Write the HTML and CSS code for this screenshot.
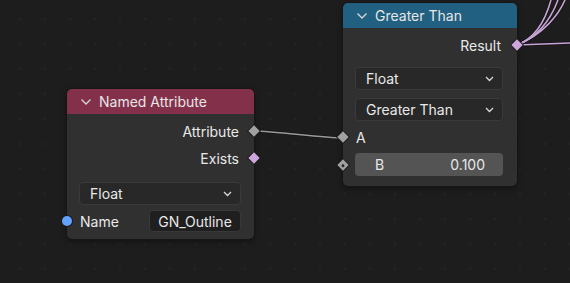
FILE: index.html
```html
<!DOCTYPE html>
<html lang="en">
<head>
  <meta charset="UTF-8">
  <meta name="viewport" content="width=device-width, initial-scale=1.0">
  <title>Node Editor</title>
  <link rel="stylesheet" href="styles.css">
</head>
<body>
  <div class="node-editor">
    <!-- Links between sockets -->
    <svg class="links" width="570" height="283" viewBox="0 0 570 283">
      <g class="link-shadow">
        <path d="M254 131 C 276 131.5, 321 137.5, 343 138" />
        <path d="M517 45 L 570 43" />
        <path d="M517 45 C 536 38, 546 18, 551 0" />
        <path d="M517 45 C 540 36, 552 16, 558 0" />
        <path d="M517 45 C 544 34, 559 14, 565 0" />
      </g>
      <path class="link link-grey" d="M254 131 C 276 131.5, 321 137.5, 343 138" />
      <g class="link link-pink">
        <path d="M517 45 L 570 43" />
        <path d="M517 45 C 536 38, 546 18, 551 0" />
        <path d="M517 45 C 540 36, 552 16, 558 0" />
        <path d="M517 45 C 544 34, 559 14, 565 0" />
      </g>
    </svg>

    <!-- Named Attribute node -->
    <div class="node node-attribute">
      <div class="node-header header-attribute">
        <svg class="collapse" width="12" height="8" viewBox="0 0 12 8"><polyline points="1.5,1.5 6,6 10.5,1.5" /></svg>
        <span>Named Attribute</span>
      </div>
      <div class="node-body">
        <div class="row output first">
          <span>Attribute</span>
          <i class="socket socket-out diamond grey"></i>
        </div>
        <div class="row output second">
          <span>Exists</span>
          <i class="socket socket-out diamond pink"></i>
        </div>
        <div class="dropdown spaced">
          <span>Float</span>
          <svg class="chevron" width="9" height="6" viewBox="0 0 9 6"><polyline points="1,1 4.5,4.5 8,1" /></svg>
        </div>
        <div class="row input name-row">
          <i class="socket socket-in circle blue"></i>
          <span class="label">Name</span>
          <div class="text-field">GN_Outline</div>
        </div>
      </div>
    </div>

    <!-- Greater Than node -->
    <div class="node node-compare">
      <div class="node-header header-compare">
        <svg class="collapse" width="12" height="8" viewBox="0 0 12 8"><polyline points="1.5,1.5 6,6 10.5,1.5" /></svg>
        <span>Greater Than</span>
      </div>
      <div class="node-body">
        <div class="row output first">
          <span>Result</span>
          <i class="socket socket-out diamond pink"></i>
        </div>
        <div class="dropdown result-gap">
          <span>Float</span>
          <svg class="chevron" width="9" height="6" viewBox="0 0 9 6"><polyline points="1,1 4.5,4.5 8,1" /></svg>
        </div>
        <div class="dropdown stacked">
          <span>Greater Than</span>
          <svg class="chevron" width="9" height="6" viewBox="0 0 9 6"><polyline points="1,1 4.5,4.5 8,1" /></svg>
        </div>
        <div class="row input a-row">
          <i class="socket socket-in diamond grey"></i>
          <span class="label">A</span>
        </div>
        <div class="value-field">
          <i class="socket socket-in diamond grey dotted"></i>
          <span>B</span>
          <span>0.100</span>
        </div>
      </div>
    </div>
  </div>
</body>
</html>
```

FILE: styles.css
```css
body {
  margin: 0;
  background-color: #1d1d1d;
  font-family: Inter, "Noto Sans", sans-serif;
  font-size: 14px;
  color: #e8e8e8;
  overflow: hidden;
}

.node-editor {
  position: relative;
  width: 570px;
  height: 283px;
  overflow: hidden;
  background-color: #1d1d1d;
  background-image: radial-gradient(circle, #272727 0.8px, transparent 1.3px);
  background-size: 25px 25px;
  background-position: 7.5px 6.5px;
}

/* Links */
.links {
  position: absolute;
  left: 0;
  top: 0;
}

.links path {
  fill: none;
}

.link-shadow path {
  stroke: #141414;
  stroke-width: 3;
}

.link {
  stroke-width: 1.6;
}

.link-grey {
  stroke: #9a9a9a;
}

.link-pink path {
  stroke: #c7a3d6;
}

/* Nodes */
.node {
  position: absolute;
  background-color: #303030;
  border-radius: 5px;
  box-shadow: 0 0 0 1px #161616, 0 2px 6px rgba(0, 0, 0, 0.45);
}

.node-attribute {
  left: 67px;
  top: 89px;
  width: 187px;
  height: 150px;
}

.node-compare {
  left: 343px;
  top: 3px;
  width: 174px;
  height: 183px;
}

.node-header {
  height: 25px;
  display: flex;
  align-items: center;
  gap: 7px;
  padding-left: 13px;
  border-radius: 5px 5px 0 0;
  color: #e6e6e6;
}

.header-attribute {
  background-color: #83304a;
}

.header-compare {
  background-color: #226081;
}

.collapse polyline,
.chevron polyline {
  fill: none;
  stroke: #d8d8d8;
  stroke-width: 1.3;
}

.node-body {
  display: flex;
  flex-direction: column;
  padding: 0 13px 0 12px;
}

.node-compare .node-body {
  padding-right: 14px;
}

/* Rows */
.row {
  position: relative;
  height: 22px;
  display: flex;
  align-items: center;
}

.row.output {
  justify-content: flex-end;
  padding-right: 2px;
}

.row.first {
  margin-top: 6px;
}

.row.second {
  margin-top: 5px;
}

.label {
  flex: 1;
  padding-left: 1px;
}

.name-row {
  margin-top: 5px;
}

.a-row {
  margin-top: 5px;
}

/* Sockets */
.socket {
  position: absolute;
  display: block;
  top: 50%;
}

.socket-out {
  right: -13px;
}

.node-compare .socket-out {
  right: -14px;
}

.socket-in {
  left: -12px;
}

.diamond {
  width: 8px;
  height: 8px;
  margin-top: -4px;
  margin-right: -4px;
  transform: rotate(45deg);
  box-shadow: 0 0 0 1px #1a1a1a;
}

.socket-in.diamond {
  margin-left: -4px;
  margin-right: 0;
}

.circle {
  width: 10px;
  height: 10px;
  margin-top: -5px;
  margin-left: -5px;
  border-radius: 50%;
  box-shadow: 0 0 0 1px #1a1a1a;
}

.grey {
  background-color: #a1a1a1;
}

.pink {
  background-color: #cca6dc;
}

.blue {
  background-color: #63a2ff;
}

.dotted::after {
  content: "";
  position: absolute;
  left: 2.5px;
  top: 2.5px;
  width: 3px;
  height: 3px;
  border-radius: 50%;
  background-color: #2a2a2a;
}

/* Widgets */
.dropdown {
  height: 23px;
  box-sizing: border-box;
  display: flex;
  align-items: center;
  justify-content: space-between;
  padding: 0 8px 0 10px;
  background-color: #282828;
  border: 1px solid #3a3a3a;
  border-radius: 4px;
}

.dropdown.spaced {
  margin-top: 13px;
}

.dropdown.result-gap {
  margin-top: 11px;
}

.dropdown.stacked {
  margin-top: 8px;
}

.text-field {
  width: 92px;
  height: 22px;
  box-sizing: border-box;
  display: flex;
  align-items: center;
  justify-content: center;
  background-color: #1f1f1f;
  border: 1px solid #383838;
  border-radius: 4px;
}

.value-field {
  position: relative;
  margin-top: 5px;
  height: 23px;
  box-sizing: border-box;
  display: flex;
  align-items: center;
  justify-content: space-between;
  padding: 0 18px 0 20px;
  background-color: #545454;
  border-radius: 4px;
}
```
